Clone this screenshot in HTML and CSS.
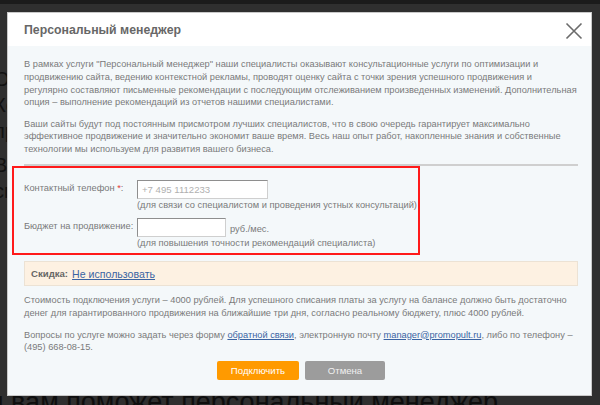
FILE: index.html
```html
<!DOCTYPE html>
<html lang="ru">
<head>
<meta charset="utf-8">
<title>Персональный менеджер</title>
<link rel="stylesheet" href="styles.css">
</head>
<body>
<div class="page">
  <div class="topbar"></div>
  <div class="intro">
    <p>Оптимизация сайта и продвижение в поисковых системах — Контекстная реклама и аналитика для вашего бизнеса, рост продаж</p>
    <p>Ваша реклама работает эффективно, а персональный специалист контролирует каждый шаг продвижения</p>
  </div>
  <h2 class="page-heading">Чем вам поможет персональный менеджер</h2>
</div>

<div class="modal">
  <div class="modal-header">
    <span class="modal-title">Персональный менеджер</span>
    <span class="close" aria-label="Закрыть">
      <svg width="18" height="18" viewBox="0 0 18 18"><path d="M1.5 1.5 L16.5 16.5 M16.5 1.5 L1.5 16.5" stroke="#6b6b6b" stroke-width="1.6" fill="none"/></svg>
    </span>
  </div>
  <div class="modal-body">
    <p class="text">В рамках услуги "Персональный менеджер" наши специалисты оказывают консультационные услуги по оптимизации и продвижению сайта, ведению контекстной рекламы, проводят оценку сайта с точки зрения успешного продвижения и<br>регулярно составляют письменные рекомендации с последующим отслеживанием произведенных изменений. Дополнительная опция – выполнение рекомендаций из отчетов нашими специалистами.</p>
    <p class="text text-gap">Ваши сайты будут под постоянным присмотром лучших специалистов, что в свою очередь гарантирует максимально эффективное продвижение и значительно экономит ваше время. Весь наш опыт работ, накопленные знания и собственные технологии мы используем для развития вашего бизнеса.</p>
    <div class="sep"></div>
    <div class="form-block">
      <div class="row">
        <label class="label">Контактный телефон <span class="req">*</span>:</label>
        <div class="field">
          <div class="field-line"><input class="input input-phone" type="text" placeholder="+7 495 1112233"></div>
          <div class="hint">(для связи со специалистом и проведения устных консультаций)</div>
        </div>
      </div>
      <div class="row row-next">
        <label class="label">Бюджет на продвижение:</label>
        <div class="field">
          <div class="field-line"><input class="input input-budget" type="text"><span class="unit">руб./мес.</span></div>
          <div class="hint">(для повышения точности рекомендаций специалиста)</div>
        </div>
      </div>
    </div>
    <div class="discount"><b class="discount-label">Скидка:</b> <a class="link" href="#">Не использовать</a></div>
    <p class="text info">Стоимость подключения услуги – 4000 рублей. Для успешного списания платы за услугу на балансе должно быть достаточно денег для гарантированного продвижения на ближайшие три дня, согласно реальному бюджету, плюс 4000 рублей.</p>
    <p class="text info2">Вопросы по услуге можно задать через форму <a class="link" href="#">обратной связи</a>, электронную почту <a class="link" href="#">manager@promopult.ru</a>, либо по телефону – (495) 668-08-15.</p>
    <div class="actions">
      <button class="btn btn-primary" type="button">Подключить</button>
      <button class="btn btn-cancel" type="button">Отмена</button>
    </div>
  </div>
</div>
</body>
</html>
```

FILE: styles.css
```css
html, body {
  margin: 0;
  padding: 0;
}
body {
  width: 600px;
  height: 405px;
  overflow: hidden;
  position: relative;
  background: #2f2f2f;
  font-family: "Liberation Sans", Arial, sans-serif;
}
.page {
  width: 600px;
}
.topbar {
  height: 4px;
  background: #1b1b1b;
}
.intro {
  height: 383px;
  overflow: hidden;
  margin-left: -6px;
  padding-top: 62px;
  box-sizing: border-box;
  color: #121212;
  font-size: 20px;
  line-height: 26px;
}
.intro p {
  margin: 0 0 8px;
}
.page-heading {
  margin: 0 0 0 -48px;
  font-size: 27px;
  line-height: 31px;
  font-weight: normal;
  color: #0e0e0e;
  white-space: nowrap;
}

.modal {
  position: absolute;
  left: 7px;
  top: 12px;
  width: 583px;
  border: 1px solid #c9c9c9;
  background: #f4f8fa;
}
.modal-header {
  height: 33px;
  display: flex;
  align-items: center;
  padding: 0 8px 0 16px;
  background: #ffffff;
}
.modal-title {
  font-size: 12.3px;
  font-weight: bold;
  color: #676767;
}
.close {
  margin-left: auto;
  margin-top: 2px;
  width: 18px;
  height: 18px;
  display: flex;
}
.modal-body {
  padding: 12px 13px 15px 16px;
}
.text {
  margin: 0 -8px 0 0;
  font-size: 9.25px;
  line-height: 12.8px;
  color: #7a7a7a;
}
.text-gap {
  margin-top: 8.5px;
}
.sep {
  margin-top: 8px;
  height: 2px;
  background: #cfcfcf;
}
.form-block {
  margin-left: -12px;
  width: 408px;
  box-sizing: border-box;
  border: 2px solid #ff1a1a;
  padding: 12px 0 3px 10px;
}
.row {
  display: flex;
  align-items: flex-start;
}
.row-next {
  margin-top: 6px;
}
.label {
  width: 113px;
  flex: none;
  font-size: 9.3px;
  line-height: 17px;
  color: #7a7a7a;
  white-space: nowrap;
}
.req {
  color: #e33b3b;
}
.field-line {
  display: flex;
  align-items: center;
  gap: 4px;
}
.input {
  height: 19px;
  box-sizing: border-box;
  margin: 0;
  padding: 0 4px;
  border: 1px solid;
  border-color: #8e8e8e #cfcfcf #cfcfcf #8e8e8e;
  background: #ffffff;
  font-family: "Liberation Sans", Arial, sans-serif;
  font-size: 9.6px;
  color: #555;
  outline: none;
}
.input::placeholder {
  color: #b0b0b0;
}
.input-phone {
  width: 131px;
}
.input-budget {
  width: 89px;
}
.unit {
  font-size: 9.3px;
  color: #7a7a7a;
  padding-top: 2px;
}
.hint {
  font-size: 9.3px;
  line-height: 13px;
  color: #7a7a7a;
  white-space: nowrap;
}
.discount {
  margin-top: 6px;
  height: 25px;
  box-sizing: border-box;
  display: flex;
  align-items: center;
  gap: 4px;
  padding-left: 6px;
  background: #fdf1e2;
  border: 1px solid #ece2d4;
  font-size: 9.6px;
}
.discount-label {
  color: #666;
}
.link {
  color: #3a64a3;
  text-decoration: underline;
}
.discount .link {
  font-size: 10.6px;
}
.info {
  margin-top: 8px;
}
.info2 {
  margin-top: 9px;
}
.actions {
  margin-top: 7px;
  display: flex;
  justify-content: center;
  gap: 6px;
}
.btn {
  height: 19px;
  border: 0;
  border-radius: 2px;
  padding: 0;
  font-family: "Liberation Sans", Arial, sans-serif;
  font-size: 9.6px;
  cursor: pointer;
}
.btn-primary {
  width: 82px;
  background: #ff9a00;
  color: #ffffff;
}
.btn-cancel {
  width: 80px;
  background: #9c9c9c;
  color: #f0f0f0;
}
```
